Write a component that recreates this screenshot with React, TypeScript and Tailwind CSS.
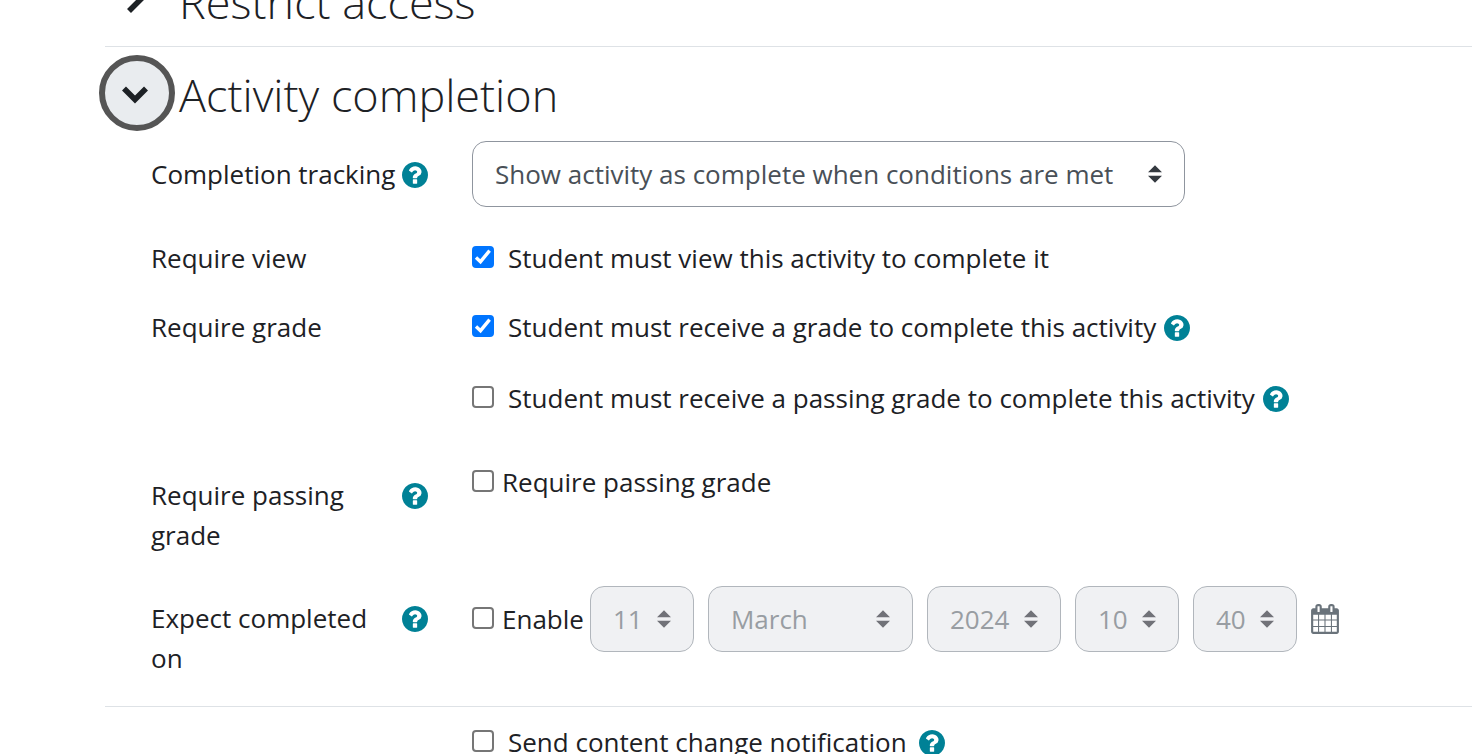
import React from 'react';

const days = ['10', '11', '12'];
const months = ['February', 'March', 'April'];
const years = ['2023', '2024', '2025'];
const hours = ['09', '10', '11'];
const minutes = ['35', '40', '45'];

function HelpIcon({ about }: { about: string }) {
  return (
    <button type="button" aria-label={`Help with ${about}`} className="flex h-[42px] shrink-0 items-center text-[#008196]">
      <svg viewBox="128 128 1536 1536" className="size-[26px]" fill="currentColor" aria-hidden="true">
        <path d="M1024 1376v-192q0-14-9-23t-23-9h-192q-14 0-23 9t-9 23v192q0 14 9 23t23 9h192q14 0 23-9t9-23zm256-672q0-88-55.5-163t-138.5-116-170-41q-243 0-371 213-15 24 8 42l132 100q7 6 19 6 16 0 25-12 53-68 86-92 34-24 86-24 48 0 85.5 26t37.5 59q0 38-20 61t-68 45q-63 28-115.5 86.5t-52.5 125.5v36q0 14 9 23t23 9h192q14 0 23-9t9-23q0-19 21.5-49.5t54.5-49.5q32-18 49-28.5t46-35 44.5-48 28-60.5 12.5-81zm384 192q0 209-103 385.5t-279.5 279.5-385.5 103-385.5-103-279.5-279.5-103-385.5 103-385.5 279.5-279.5 385.5-103 385.5 103 279.5 279.5 103 385.5z" />
      </svg>
    </button>
  );
}

function CalendarIcon() {
  return (
    <svg viewBox="64 0 1664 1792" className="h-[30px] w-7" fill="currentColor" aria-hidden="true">
      <path d="M192 1664h288v-288h-288v288zm352 0h320v-288h-320v288zm-352-352h288v-320h-288v320zm352 0h320v-320h-320v320zm-352-384h288v-288h-288v288zm736 736h320v-288h-320v288zm-384-736h320v-288h-320v288zm768 736h288v-288h-288v288zm-384-352h320v-320h-320v320zm-352-864v-288q0-13-9.5-22.5t-22.5-9.5h-64q-13 0-22.5 9.5t-9.5 22.5v288q0 13 9.5 22.5t22.5 9.5h64q13 0 22.5-9.5t9.5-22.5zm736 864h288v-320h-288v320zm-384-384h320v-288h-320v288zm384 0h288v-288h-288v288zm32-480v-288q0-13-9.5-22.5t-22.5-9.5h-64q-13 0-22.5 9.5t-9.5 22.5v288q0 13 9.5 22.5t22.5 9.5h64q13 0 22.5-9.5t9.5-22.5zm384-64v1280q0 52-38 90t-90 38h-1408q-52 0-90-38t-38-90v-1280q0-52 38-90t90-38h128v-96q0-66 47-113t113-47h64q66 0 113 47t47 113v96h384v-96q0-66 47-113t113-47h64q66 0 113 47t47 113v96h128q52 0 90 38t38 90z" />
    </svg>
  );
}

type SelectProps = {
  id?: string;
  label?: string;
  value: string;
  options: string[];
  width: string;
  disabled?: boolean;
};

function Select({ id, label, value, options, width, disabled }: SelectProps) {
  return (
    <div className={`relative ${width}`}>
      <select
        id={id}
        aria-label={label}
        defaultValue={value}
        disabled={disabled}
        className="block h-[66px] w-full appearance-none rounded-[14px] border border-[#8f959e] bg-white pr-11 pl-[22px] text-[#495057] disabled:border-[#b1b6bc] disabled:bg-[#f0f1f3] disabled:text-[#989da2] disabled:opacity-100"
      >
        {options.map((option) => (
          <option key={option}>{option}</option>
        ))}
      </select>
      <svg
        viewBox="0 0 4 5"
        className={`pointer-events-none absolute top-6 right-[23px] h-[18px] w-[14px] ${disabled ? 'text-[#717278]' : 'text-[#343a40]'}`}
        fill="currentColor"
        aria-hidden="true"
      >
        <path d="M2 0L0 2h4zm0 5L0 3h4z" />
      </svg>
    </div>
  );
}

type CheckboxProps = {
  id: string;
  label: string;
  checked?: boolean;
  tight?: boolean;
};

function Checkbox({ id, label, checked, tight }: CheckboxProps) {
  return (
    <div className={`flex items-start ${tight ? 'gap-2' : 'gap-[14px]'}`}>
      <div className="relative mt-2 size-[22px] shrink-0">
        <input
          id={id}
          type="checkbox"
          defaultChecked={checked}
          className="peer block size-[22px] appearance-none rounded-[4px] border-2 border-[#767676] bg-white checked:border-[#0075ff] checked:bg-[#0075ff]"
        />
        <svg
          viewBox="0 0 22 22"
          className="pointer-events-none absolute inset-0 hidden size-[22px] peer-checked:block"
          fill="none"
          stroke="white"
          strokeWidth="3.4"
          aria-hidden="true"
        >
          <path d="M4 11.5l4.5 4.2L17.6 4.6" />
        </svg>
      </div>
      <label htmlFor={id}>{label}</label>
    </div>
  );
}

function SectionHeader({ title, open }: { title: string; open?: boolean }) {
  return (
    <div className="-ml-[6px] flex h-[76px] items-center gap-1">
      <button
        type="button"
        aria-expanded={!!open}
        aria-label={title}
        className={`flex size-[76px] shrink-0 items-center justify-center rounded-full border-[6px] pr-1 ${
          open ? 'border-[#555555] bg-[#e9ecef]' : 'border-transparent'
        }`}
      >
        <svg viewBox="0 0 28 28" className="size-7" fill="none" stroke="currentColor" strokeWidth="5.6" aria-hidden="true">
          {open ? <path d="M3 9.5l11 11 11-11" /> : <path d="M8 3l11 11L8 25" />}
        </svg>
      </button>
      <h3 className="pt-1 text-[45px] leading-[64px] font-light">{title}</h3>
    </div>
  );
}

type RowProps = {
  label?: string;
  htmlFor?: string;
  help?: boolean;
  labelClass?: string;
  className?: string;
  children: React.ReactNode;
};

function Row({ label, htmlFor, help, labelClass = '', className = '', children }: RowProps) {
  return (
    <div className={`flex items-start pl-[46px] ${className}`}>
      <div className={`flex w-[321px] shrink-0 items-start justify-between gap-1 pr-11 ${labelClass}`}>
        {htmlFor ? <label htmlFor={htmlFor}>{label}</label> : <p>{label}</p>}
        {help && <HelpIcon about={label ?? ''} />}
      </div>
      <div className="min-w-0 flex-1">{children}</div>
    </div>
  );
}

export default function App() {
  return (
    <main className="h-screen overflow-hidden bg-white pl-[105px] font-['Open_Sans','Noto_Sans',sans-serif] text-[26px] leading-10 text-[#1d2125]">
      <form>
        <section className="-mt-[38px] border-b border-[#dee2e6] pb-2">
          <SectionHeader title="Restrict access" />
        </section>

        <section className="border-b border-[#dee2e6] pt-2 pb-7">
          <SectionHeader title="Activity completion" open />

          <Row label="Completion tracking" htmlFor="tracking" help labelClass="pt-[13px]" className="mt-[10px]">
            <Select
              id="tracking"
              width="w-[713px] max-w-full"
              value="Show activity as complete when conditions are met"
              options={[
                'Do not indicate activity completion',
                'Students can manually mark the activity as completed',
                'Show activity as complete when conditions are met',
              ]}
            />
          </Row>

          <Row label="Require view" className="mt-[31px]">
            <Checkbox id="view" label="Student must view this activity to complete it" checked />
          </Row>

          <Row label="Require grade" className="mt-[29px]">
            <div className="flex items-start gap-2">
              <Checkbox id="grade" label="Student must receive a grade to complete this activity" checked />
              <HelpIcon about="Require grade" />
            </div>
            <div className="mt-[29px] flex items-start gap-2">
              <Checkbox id="passgrade" label="Student must receive a passing grade to complete this activity" />
              <HelpIcon about="Passing grade" />
            </div>
          </Row>

          <Row label="Require passing grade" help labelClass="pt-[13px]" className="mt-[42px]">
            <Checkbox id="requirepass" label="Require passing grade" tight />
          </Row>

          <Row label="Expect completed on" help labelClass="pt-3" className="mt-[31px]">
            <div className="flex items-center gap-[6px]">
              <Checkbox id="enable" label="Enable" tight />
              <div className="flex items-center gap-[14px]">
                <Select label="Day" width="w-[104px]" value="11" options={days} disabled />
                <Select label="Month" width="w-[205px]" value="March" options={months} disabled />
                <Select label="Year" width="w-[134px]" value="2024" options={years} disabled />
                <Select label="Hour" width="w-[104px]" value="10" options={hours} disabled />
                <Select label="Minute" width="w-[104px]" value="40" options={minutes} disabled />
                <button type="button" aria-label="Calendar" className="text-[#6a737b]">
                  <CalendarIcon />
                </button>
              </div>
            </div>
          </Row>
        </section>

        <Row className="mt-[15px]">
          <div className="flex items-start gap-3">
            <Checkbox id="notify" label="Send content change notification" />
            <HelpIcon about="Send content change notification" />
          </div>
        </Row>
      </form>
    </main>
  );
}
